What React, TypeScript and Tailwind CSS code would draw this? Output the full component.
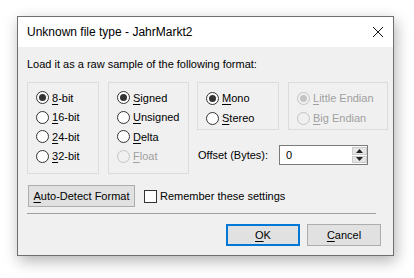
import React from "react";

const cn = (...c: (string | false | undefined)[]) => c.filter(Boolean).join(" ");

const Accel = ({ text }: { text: string }) => (
  <>
    <span className="underline underline-offset-[2px]">{text[0]}</span>
    {text.slice(1)}
  </>
);

interface RadioProps {
  label: string;
  checked?: boolean;
  disabled?: boolean;
  tall?: boolean;
}

const Radio: React.FC<RadioProps> = ({ label, checked, disabled, tall }) => (
  <div className={cn("flex items-center", tall ? "h-[20px]" : "h-[19.5px]")}>
    <span
      className={cn(
        "w-[13px] h-[13px] rounded-full border flex items-center justify-center shrink-0",
        disabled ? "border-[#c4c4c4] bg-[#f0f0f0]" : "border-[#333333] bg-white"
      )}
    >
      {checked && (
        <span
          className={cn(
            "w-[7px] h-[7px] rounded-full",
            disabled ? "bg-[#c4c4c4]" : "bg-[#333333]"
          )}
        />
      )}
    </span>
    <span className={cn("ml-[3px]", disabled && "text-[#a0a0a0]")}>
      <Accel text={label} />
    </span>
  </div>
);

const Group = ({ className, children }: { className: string; children: React.ReactNode }) => (
  <div className={cn("border border-[#dcdcdc] pl-[8px] pt-[5px]", className)}>{children}</div>
);

const Button = ({ label, focused, className }: { label: string; focused?: boolean; className: string }) => (
  <button
    className={cn(
      "bg-[#e1e1e1] flex items-center justify-center h-[22px]",
      focused ? "border-2 border-[#0078d7]" : "border border-[#adadad]",
      className
    )}
  >
    <Accel text={label} />
  </button>
);

export default function App() {
  return (
    <div
      className="w-[414px] h-[278px] bg-white pt-[16px] pl-[17px] text-[11px] text-black leading-[16px]"
      style={{ fontFamily: '"Liberation Sans", Arial, sans-serif' }}
    >
      <div className="w-[377px] h-[240px] border border-[#6f6f6f] flex flex-col shadow-[2px_5px_14px_rgba(0,0,0,0.3)]">
        <div className="h-[30px] bg-white flex items-center justify-between pl-[9px] pr-[8px]">
          <span className="text-[12px]">Unknown file type - JahrMarkt2</span>
          <svg width="12" height="12" viewBox="0 0 12 12" className="mr-[1px]">
            <path d="M1 1L11 11M11 1L1 11" stroke="#111" strokeWidth="1" />
          </svg>
        </div>
        <div className="flex-1 bg-[#f0f0f0] pl-[9px] pt-[9px] flex flex-col">
          <div>Load it as a raw sample of the following format:</div>
          <div className="flex mt-[10px]">
            <Group className="w-[72px] h-[92px]">
              <Radio label="8-bit" checked />
              <Radio label="16-bit" />
              <Radio label="24-bit" />
              <Radio label="32-bit" />
            </Group>
            <Group className="w-[81px] h-[92px] ml-[9px]">
              <Radio label="Signed" checked />
              <Radio label="Unsigned" />
              <Radio label="Delta" />
              <Radio label="Float" disabled />
            </Group>
            <div className="ml-[8px] flex flex-col">
              <div className="flex">
                <Group className="w-[82px] h-[48px]">
                  <Radio label="Mono" checked tall />
                  <Radio label="Stereo" tall />
                </Group>
                <Group className="w-[100px] h-[48px] ml-[9px]">
                  <Radio label="Little Endian" checked disabled tall />
                  <Radio label="Big Endian" disabled tall />
                </Group>
              </div>
              <div className="flex items-center mt-[15px]">
                <span className="w-[82px] pl-[1px]">Offset (Bytes):</span>
                <div className="w-[89px] h-[20px] border border-[#7a7a7a] bg-white flex items-center">
                  <span className="flex-1 pl-[6px]">0</span>
                  <div className="w-[16px] h-full flex flex-col gap-px p-px pr-0">
                    <div className="flex-1 bg-[#e5e5e5] border border-[#cccccc] flex items-center justify-center">
                      <svg width="7" height="4" viewBox="0 0 7 4"><path d="M3.5 0L7 4H0Z" fill="#222" /></svg>
                    </div>
                    <div className="flex-1 bg-[#e5e5e5] border border-[#cccccc] flex items-center justify-center">
                      <svg width="7" height="4" viewBox="0 0 7 4"><path d="M0 0H7L3.5 4Z" fill="#222" /></svg>
                    </div>
                  </div>
                </div>
              </div>
            </div>
          </div>
          <div className="flex items-center mt-[11px]">
            <Button label="Auto-Detect Format" className="w-[107px] ml-[1px]" />
            <span className="ml-[9px] w-[13px] h-[13px] border border-[#333333] bg-white" />
            <span className="ml-[3px]">Remember these settings</span>
          </div>
          <div className="w-[349px] border-t border-[#a0a0a0] mt-[6px]" />
          <div className="flex mt-[10px] pl-[199px]">
            <Button label="OK" focused className="w-[74px]" />
            <Button label="Cancel" className="w-[74px] ml-[7px]" />
          </div>
        </div>
      </div>
    </div>
  );
}
